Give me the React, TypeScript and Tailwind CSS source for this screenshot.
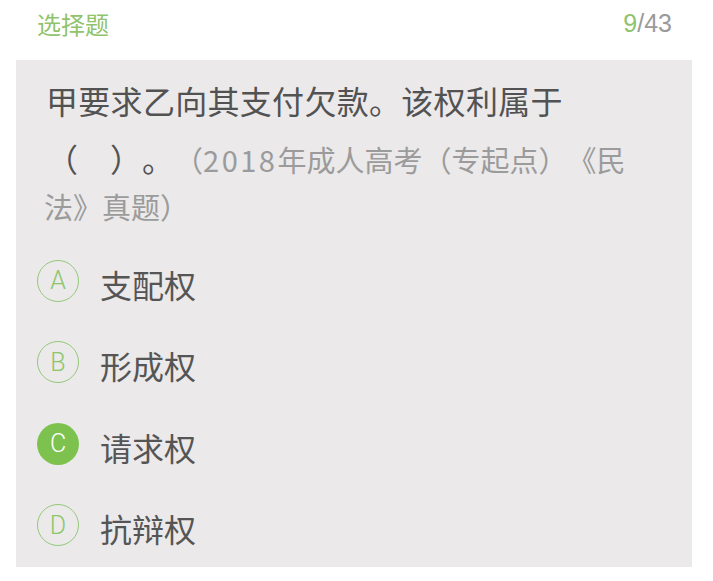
const options = [
  { key: 'A', text: '支配权', picked: false },
  { key: 'B', text: '形成权', picked: false },
  { key: 'C', text: '请求权', picked: true },
  { key: 'D', text: '抗辩权', picked: false },
];

const cjk = { fontFamily: '"Noto Sans CJK SC", "Noto Sans", sans-serif' };
const latin = { fontFamily: '"Liberation Sans", "Noto Sans CJK SC", sans-serif' };

export default function App() {
  return (
    <main className="w-[713px] h-[581px] bg-white overflow-hidden [text-spacing-trim:space-all]" style={cjk}>
      {/* top bar */}
      <header className="h-[48px] flex items-center justify-between pl-[37px] pr-[41px]">
        <span className="text-[24px] text-[#8fc36c]">选择题</span>
        <span className="text-[25px] text-[#9a9a9a]" style={latin}>
          <span className="text-[#8fc36c]">9</span>/43
        </span>
      </header>

      <section className="mt-[12px] ml-[16px] w-[676px] h-[507px] bg-[#ebe9ea] overflow-hidden">
        <div className="pt-[11px] pl-[30px] text-[#525252]">
          <div className="text-[32px] leading-[58px] tracking-[0.3px]">甲要求乙向其支付欠款。该权利属于</div>
          <div className="text-[32px] leading-[58px] whitespace-nowrap">
            （　）。
            <span className="text-[29px] text-[#9b9b9b]">
              （<span className="tracking-[2.5px]">2018</span>年成人高考（专起点）《民
            </span>
          </div>
          <div className="text-[29px] leading-[36px] text-[#9b9b9b] -ml-[2px]">法》真题）</div>
        </div>

        <ul className="mt-[16px]">
          {options.map((o) => (
            <li key={o.key} className="h-[81.5px] flex items-center">
              <span
                className={
                  o.picked
                    ? 'ml-[21px] w-[42px] h-[42px] rounded-full bg-[#7dc24f] text-white flex items-center justify-center text-[25px] font-light'
                    : 'ml-[21px] w-[42px] h-[42px] rounded-full border-[1.5px] border-[#93c97a] text-[#8cc66a] flex items-center justify-center text-[25px] font-light'
                }
                style={{ fontFamily: 'Roboto, "Liberation Sans", sans-serif' }}
              >
                {o.key}
              </span>
              <span className="ml-[21px] pt-[6px] text-[32px] text-[#555555]">{o.text}</span>
            </li>
          ))}
        </ul>
      </section>
    </main>
  );
}
